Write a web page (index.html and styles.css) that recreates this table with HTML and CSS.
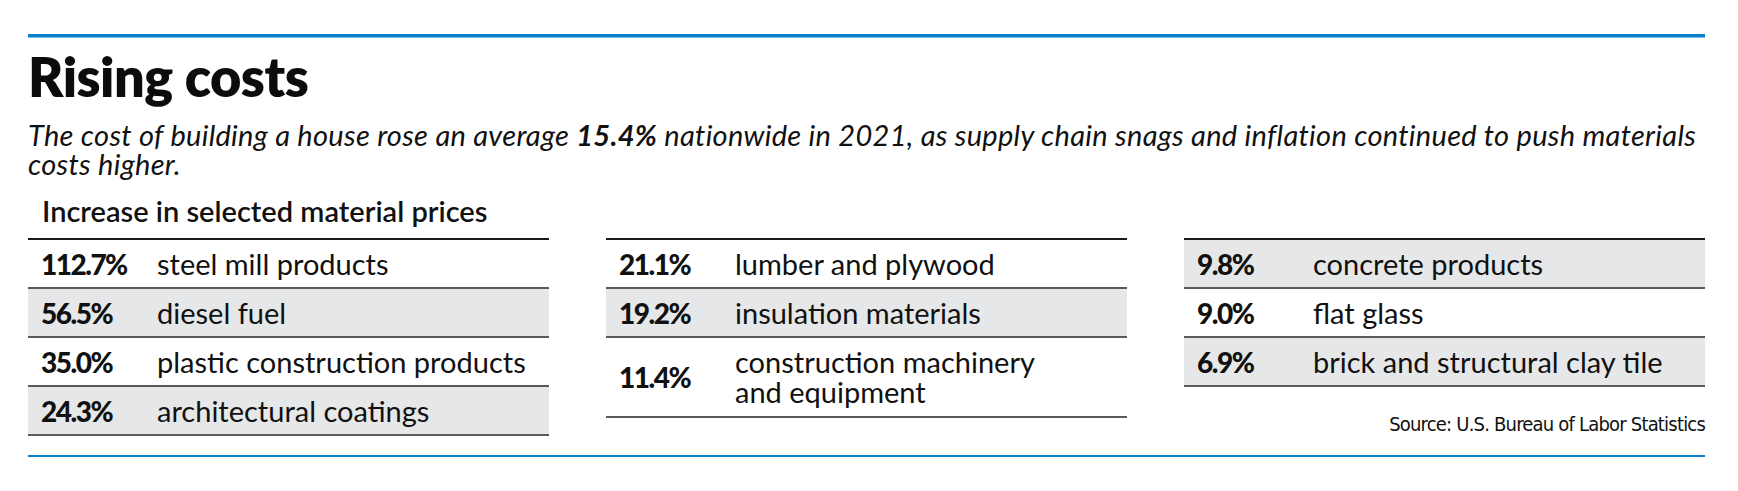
FILE: index.html
```html
<!DOCTYPE html>
<html lang="en">
<head>
<meta charset="utf-8">
<title>Rising costs</title>
<link rel="stylesheet" href="styles.css">
</head>
<body>
<div class="graphic">
  <div class="rule rule-top"></div>
  <h1 class="title">Rising costs</h1>
  <p class="dek">The cost of building a house rose an average <b>15.4%</b> nationwide in 2021, as supply chain snags and inflation continued to push materials costs higher.</p>
  <h2 class="chart-label">Increase in selected material prices</h2>
  <div class="columns">
    <div class="col">
      <div class="table">
        <div class="row"><span class="pct">112.7%</span><span class="item">steel mill products</span></div>
        <div class="row shade"><span class="pct">56.5%</span><span class="item">diesel fuel</span></div>
        <div class="row"><span class="pct">35.0%</span><span class="item">plastic construction products</span></div>
        <div class="row shade"><span class="pct">24.3%</span><span class="item">architectural coatings</span></div>
      </div>
    </div>
    <div class="col">
      <div class="table">
        <div class="row"><span class="pct">21.1%</span><span class="item">lumber and plywood</span></div>
        <div class="row shade"><span class="pct">19.2%</span><span class="item">insulation materials</span></div>
        <div class="row tall"><span class="pct">11.4%</span><span class="item">construction machinery<br>and equipment</span></div>
      </div>
    </div>
    <div class="col">
      <div class="table">
        <div class="row shade"><span class="pct">9.8%</span><span class="item">concrete products</span></div>
        <div class="row"><span class="pct">9.0%</span><span class="item">flat glass</span></div>
        <div class="row shade"><span class="pct">6.9%</span><span class="item">brick and structural clay tile</span></div>
      </div>
      <div class="source">Source: U.S. Bureau of Labor Statistics</div>
    </div>
  </div>
  <div class="rule rule-bottom"></div>
</div>
</body>
</html>
```
FILE: styles.css
```css
html, body {
  margin: 0;
  padding: 0;
  background: #ffffff;
}

body {
  font-family: Lato, "Open Sans", Arial, sans-serif;
  color: #111111;
}

.graphic {
  width: 1677px;
  margin-left: 28px;
  padding-top: 34px;
}

.rule {
  background: #0b7fcc;
}

.rule-top {
  height: 3px;
  box-shadow: 0 1px 0 #7fbde6;
}

.rule-bottom {
  height: 2px;
  margin-top: 19px;
}

.title {
  margin: 9px 0 0 0;
  font-size: 54px;
  line-height: 62px;
  font-weight: 800;
  letter-spacing: -0.5px;
  color: #0c0c0c;
}

.dek {
  margin: 12px 0 0 0;
  font-size: 29px;
  line-height: 29px;
  font-style: italic;
  font-weight: 400;
  letter-spacing: 0.3px;
  color: #111111;
}

.dek b {
  font-weight: 700;
}

.chart-label {
  margin: 17px 0 0 14px;
  font-size: 29px;
  line-height: 32px;
  font-weight: 600;
  color: #111111;
}

.columns {
  margin-top: 11px;
  display: grid;
  grid-template-columns: repeat(3, 521px);
  column-gap: 57px;
  align-items: stretch;
}

.col {
  display: flex;
  flex-direction: column;
}

.table {
  border-top: 2px solid #1a1a1a;
}

.row {
  display: flex;
  align-items: center;
  height: 47px;
  border-bottom: 2px solid #5a5a5a;
  font-size: 29px;
}

.row.tall {
  height: 78px;
}

.row.shade {
  background: #e6e7e8;
}

.pct {
  width: 129px;
  padding-left: 13px;
  flex: none;
  box-sizing: border-box;
  font-size: 28px;
  font-weight: 900;
  letter-spacing: -1.5px;
}

.item {
  font-weight: 400;
  line-height: 30px;
}

.source {
  margin-top: auto;
  text-align: right;
  font-family: "Liberation Sans Narrow", "DejaVu Sans Condensed", "Roboto Condensed", sans-serif;
  font-stretch: condensed;
  font-size: 20px;
  line-height: 24px;
  letter-spacing: -0.8px;
  color: #111111;
}
```
